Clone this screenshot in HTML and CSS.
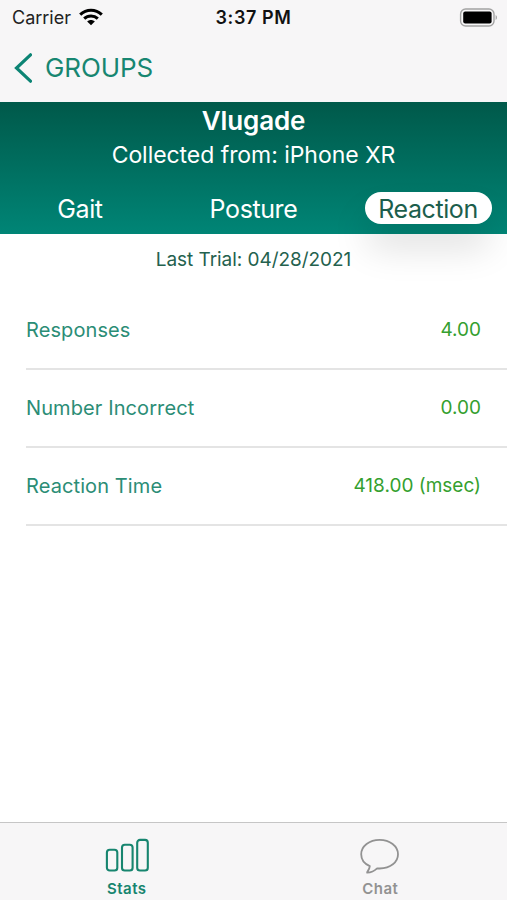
FILE: index.html
```html
<!DOCTYPE html>
<html lang="en">

<head>
    <meta charset="UTF-8">
    <meta name="viewport" content="width=device-width, initial-scale=1.0">
    <title>Vlugade - Reaction</title>
    <link rel="stylesheet" href="styles.css">
</head>

<body>
    <div class="top-bar">
        <div class="status-bar">
            <div class="carrier">
                <span>Carrier</span>
                <svg width="24" height="18" viewBox="0 0 24 18">
                    <g fill="none" stroke="#000" stroke-width="3">
                        <path d="M1.2 6.7C7.4 .7 16.6 .7 22.8 6.7" />
                        <path d="M5.2 10.7C9 7.1 15 7.1 18.8 10.7" />
                    </g>
                    <path d="M8.2 13.4C10.3 11.4 13.7 11.4 15.8 13.4L12 17.3Z" />
                </svg>
            </div>
            <span class="clock">3:37 PM</span>
            <svg class="battery" width="39" height="19" viewBox="0 0 39 19">
                <rect x="1.6" y="1" width="33.4" height="17" rx="5" fill="none" stroke="#a3a3a3" stroke-width="1.4" />
                <rect x="4.2" y="3.6" width="28.4" height="11.8" rx="2" />
                <path d="M36.6 7C38.4 7.8 38.4 11.2 36.6 12Z" fill="#a3a3a3" />
            </svg>
        </div>
        <div class="nav-bar">
            <svg width="20" height="32" viewBox="0 0 20 32">
                <path d="M18.5 2.8L4.5 16L18.5 29.2" fill="none" stroke="#0c8474" stroke-width="3.2" stroke-linecap="round" stroke-linejoin="miter" />
            </svg>
            <span class="back">GROUPS</span>
        </div>
    </div>

    <div class="header">
        <h1>Vlugade</h1>
        <p class="device">Collected from: iPhone XR</p>
        <div class="tabs">
            <div class="tab">Gait</div>
            <div class="tab">Posture</div>
            <div class="tab active">Reaction</div>
        </div>
    </div>

    <div class="content">
        <p class="last-trial">Last Trial: 04/28/2021</p>
        <div class="rows">
            <div class="row">
                <span class="label">Responses</span>
                <span class="value">4.00</span>
            </div>
            <div class="row">
                <span class="label">Number Incorrect</span>
                <span class="value">0.00</span>
            </div>
            <div class="row">
                <span class="label">Reaction Time</span>
                <span class="value">418.00 (msec)</span>
            </div>
        </div>
    </div>

    <div class="tab-bar">
        <div class="item selected">
            <svg width="46" height="37" viewBox="0 0 46 37">
                <g fill="none" stroke="#17856f" stroke-width="2.1">
                    <rect x="2.9" y="12.8" width="10.4" height="20.7" rx="2.8" />
                    <rect x="18" y="7.8" width="10.6" height="25.7" rx="2.8" />
                    <rect x="33.2" y="2.9" width="10.6" height="30.6" rx="2.8" />
                </g>
            </svg>
            <span>Stats</span>
        </div>
        <div class="item">
            <svg width="46" height="37" viewBox="0 0 46 37">
                <path d="M12.8 29.1C7.4 26.9 4.2 22.7 4.2 17.3C4.2 9.2 12.4 2.9 22.6 2.9S41 9.2 41 17.3S33.5 31.2 22.6 31.5C21.5 31.5 20.8 31.5 20.1 31.4C17.2 34.2 14 35.5 10.1 35.7C9.6 34.9 12.4 33.5 12.8 29.1Z" fill="none" stroke="#929292" stroke-width="1.8" stroke-linejoin="round" />
            </svg>
            <span>Chat</span>
        </div>
    </div>
</body>

</html>
```
FILE: styles.css
```css
* {
    margin: 0;
    padding: 0;
    box-sizing: border-box;
}

body {
    font-family: Inter, "Liberation Sans", sans-serif;
    background: #fff;
    height: 900px;
    display: flex;
    flex-direction: column;
    overflow: hidden;
}

svg {
    display: block;
    flex-shrink: 0;
}

.top-bar {
    height: 102px;
    background: #f7f6f7;
}

.status-bar {
    height: 34px;
    padding: 0 9px 0 12px;
    display: grid;
    grid-template-columns: 1fr auto 1fr;
    align-items: center;
    font-size: 18px;
    color: #222;
}

.carrier {
    display: flex;
    align-items: center;
    gap: 8px;
}

.clock {
    font-weight: 600;
    color: #111;
    letter-spacing: 0.6px;
    margin-right: 3px;
}

.battery {
    justify-self: end;
}

.nav-bar {
    height: 67px;
    padding-left: 12px;
    display: flex;
    align-items: center;
    gap: 13px;
    font-size: 26px;
    letter-spacing: -0.1px;
    color: #178671;
}

.header {
    height: 131.5px;
    padding-top: 2px;
    background: linear-gradient(#00594a, #008576);
    color: #fff;
    text-align: center;
}

h1 {
    font-size: 26px;
    font-weight: 600;
    line-height: 34px;
    letter-spacing: -0.1px;
}

.device {
    font-size: 23px;
    line-height: 34px;
    letter-spacing: -0.05px;
}

.tabs {
    display: grid;
    grid-template-columns: 160px 187px 127px;
    height: 32px;
    margin-top: 20px;
    font-size: 25px;
    line-height: 35px;
    letter-spacing: -0.4px;
}

.active {
    margin-left: 17.5px;
    width: 127px;
    height: 32px;
    border-radius: 16px;
    background: #fff;
    color: #1c5e4c;
    box-shadow: 0 24px 36px rgba(0, 0, 0, 0.13);
}

.content {
    flex: 1;
}

.last-trial {
    padding-top: 13px;
    font-size: 19px;
    line-height: 25px;
    letter-spacing: -0.05px;
    text-align: center;
    color: #24614e;
}

.rows {
    padding: 20px 0 0 26px;
}

.row {
    height: 78px;
    padding-right: 26px;
    display: flex;
    align-items: center;
    justify-content: space-between;
    border-bottom: 2px solid #e4e4e4;
    font-size: 20px;
}

.label {
    color: #2b8d76;
    letter-spacing: 0.1px;
}

.value {
    color: #35a02f;
    font-size: 19px;
}

.tab-bar {
    height: 78px;
    padding-top: 14px;
    display: grid;
    grid-template-columns: 1fr 1fr;
    background: #f7f6f7;
    border-top: 1px solid #c6c6c6;
}

.item {
    display: flex;
    flex-direction: column;
    align-items: center;
    gap: 5px;
    font-size: 15px;
    font-weight: 600;
    line-height: 20px;
    letter-spacing: 0.5px;
    color: #929292;
}

.selected {
    color: #17856f;
}
```
